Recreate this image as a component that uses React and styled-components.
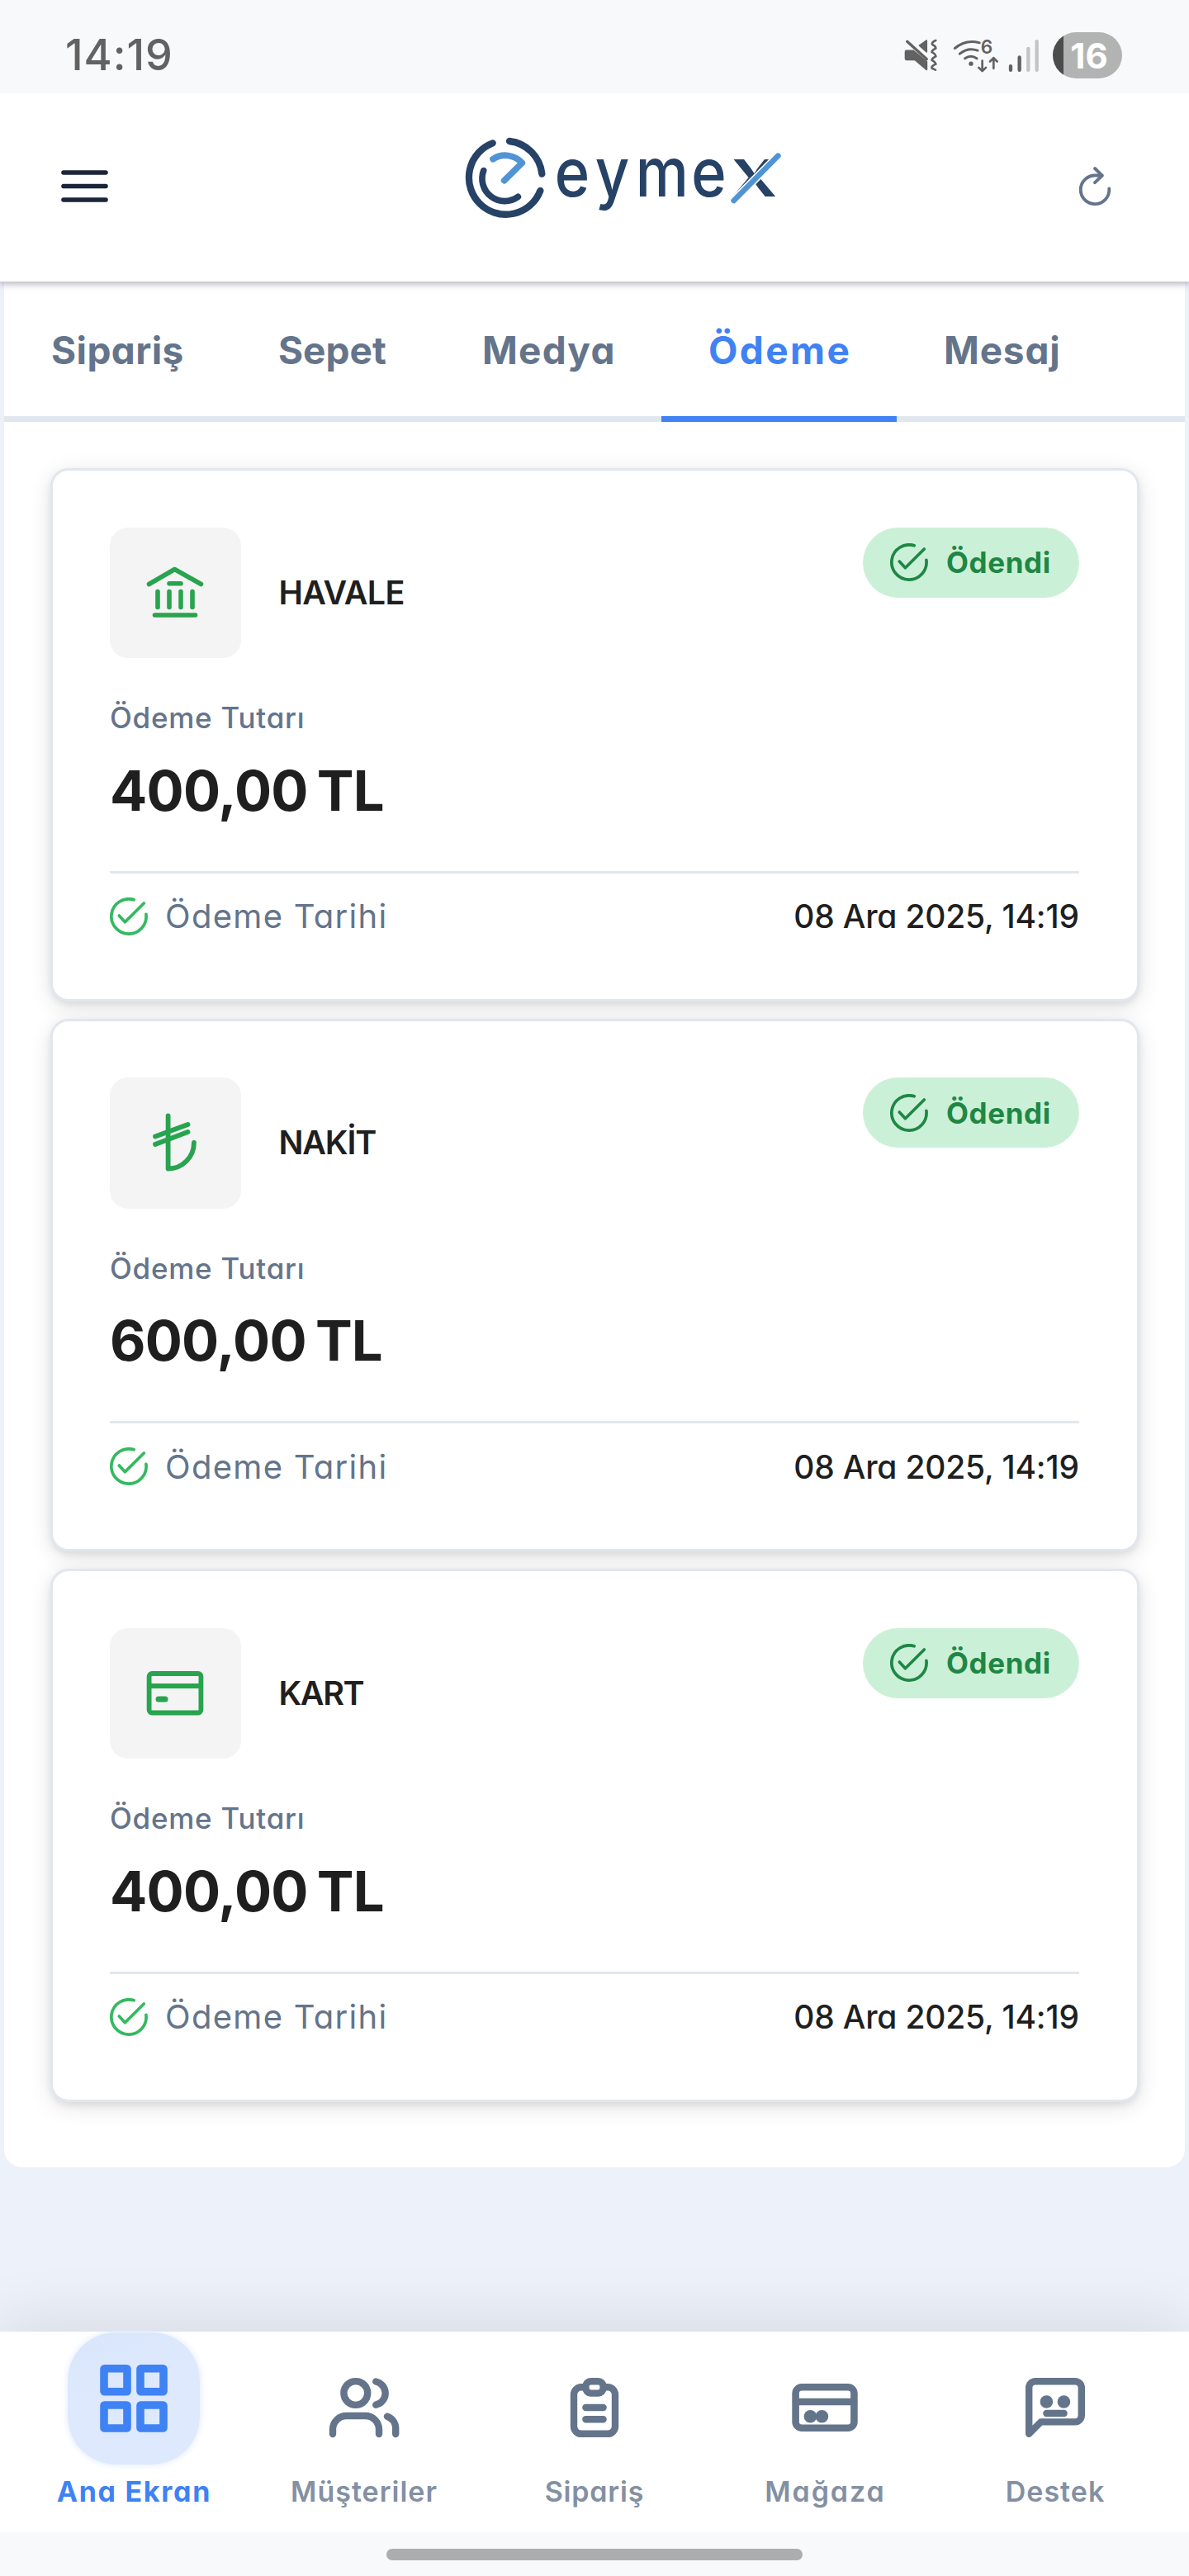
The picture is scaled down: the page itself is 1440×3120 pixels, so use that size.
import styled, { createGlobalStyle, css } from 'styled-components';

const GlobalStyle = createGlobalStyle`
  * {
    box-sizing: border-box;
  }
  body {
    margin: 0;
    background: #edf1fa;
    font-family: Inter, 'Noto Sans', sans-serif;
    font-feature-settings: 'cv11';
  }
  svg {
    display: block;
    flex: none;
  }
`;

const Page = styled.div`
  display: flex;
  flex-direction: column;
  width: 1440px;
  height: 3120px;
  overflow: hidden;
`;

// letter spacing without the gap it leaves after the last letter
const spaced = css`
  letter-spacing: ${({ $spacing = 0 }) => $spacing}px;
  margin-right: ${({ $spacing = 0 }) => -$spacing}px;
  white-space: nowrap;
`;

const StatusBar = styled.div`
  position: relative;
  z-index: 3;
  display: flex;
  justify-content: space-between;
  align-items: center;
  height: 113px;
  padding: 21px 81px 0 79px;
  background: #f8f9fb;
  color: #626262;
`;

const Clock = styled.span`
  ${spaced}
  font-size: 52px;
  font-weight: 550;
  line-height: 60px;
`;

const StatusIcons = styled.div`
  display: flex;
  align-items: center;
  .wifi {
    margin: 0 11px 0 18px;
  }
  .battery {
    margin-left: 16px;
  }
`;

const Header = styled.header`
  position: relative;
  z-index: 2;
  display: grid;
  grid-template-columns: 1fr auto 1fr;
  align-items: center;
  height: 228px;
  padding: 0 74px;
  background: #fff;
  box-shadow: 0 3px 7px rgba(30, 30, 60, 0.28), 0 3px 16px rgba(30, 30, 60, 0.06);
`;

const IconButton = styled.button`
  justify-self: ${({ $end }) => ($end ? 'end' : 'start')};
  padding: 0;
  border: 0;
  background: none;
  color: ${({ $end }) => ($end ? '#64748b' : '#1b2438')};
`;

const LogoWrap = styled.div`
  margin: -24px 0 0 60px;
`;

const Content = styled.main`
  flex: 1;
  padding: 0 5px;
`;

const Panel = styled.section`
  background: #fff;
  border-radius: 0 0 22px 22px;
`;

const Tabs = styled.nav`
  display: flex;
  height: 170px;
  box-shadow: inset 0 -7px 0 #e1e7ee;
`;

const Tab = styled.a`
  display: flex;
  align-items: center;
  width: ${({ $width }) => $width}px;
  padding: 2px 0 0 57px;
  border-bottom: 7px solid ${({ $active }) => ($active ? '#3f82f4' : 'transparent')};
  color: ${({ $active }) => ($active ? '#3f82f4' : '#64748b')};
  font-size: 46px;
  font-weight: 700;
  span {
    ${spaced}
  }
`;

const CardList = styled.div`
  display: flex;
  flex-direction: column;
  gap: 21px;
  padding: 56px 55.5px 79px;
`;

const Card = styled.article`
  height: 645.7px;
  padding: 68.5px 69.5px 0;
  border: 3.5px solid #e1e7ee;
  border-radius: 22px;
  background: #fff;
  box-shadow: 0 6px 28px rgba(0, 0, 0, 0.11), 0 4px 8px rgba(0, 0, 0, 0.08);
`;

const CardTop = styled.div`
  display: flex;
  align-items: flex-start;
  justify-content: space-between;
`;

const Method = styled.div`
  display: flex;
  align-items: center;
  gap: 46px;
`;

const MethodIcon = styled.div`
  display: flex;
  align-items: center;
  justify-content: center;
  width: 158.5px;
  height: 158.5px;
  border-radius: 22px;
  background: #f4f4f4;
  color: #28a44e;
`;

const MethodName = styled.span`
  ${spaced}
  color: #1f1f1f;
  font-size: 39.5px;
  font-weight: 600;
`;

const Badge = styled.div`
  display: flex;
  align-items: center;
  gap: 22px;
  width: 262px;
  height: 85px;
  padding-left: 33px;
  border-radius: 43px;
  background: #cbf0d8;
  color: #1f8744;
  font-size: 35px;
  font-weight: 650;
  span {
    ${spaced}
  }
`;

const AmountLabel = styled.div`
  ${spaced}
  margin-top: 46px;
  color: #64748b;
  font-size: 35px;
  font-weight: 500;
  line-height: 52px;
`;

const Amount = styled.div`
  ${spaced}
  margin-top: 12.5px;
  color: #1f1f1f;
  font-size: 67px;
  font-weight: 750;
  line-height: 100px;
  word-spacing: -4px;
`;

const CardFooter = styled.div`
  display: flex;
  align-items: center;
  justify-content: space-between;
  height: 86px;
  margin-top: 47px;
  padding-top: 21px;
  border-top: 3px solid #e1e7ee;
  font-size: 39px;
`;

const DateLabel = styled.div`
  display: flex;
  align-items: center;
  gap: 21px;
  color: #34b95f;
  font-size: 40px;
  span {
    ${spaced}
    color: #64748b;
  }
`;

const DateValue = styled.span`
  ${spaced}
  color: #1f1f1f;
  font-weight: 500;
`;

const BottomNav = styled.nav`
  position: relative;
  z-index: 1;
  display: grid;
  grid-template-columns: repeat(5, 279px);
  height: 243px;
  padding: 1px 22px 0;
  background: #fff;
  box-shadow: 0 -14px 70px rgba(0, 0, 0, 0.09);
`;

const NavItem = styled.a`
  display: flex;
  flex-direction: column;
  align-items: center;
  color: ${({ $active }) => ($active ? '#3f82f4' : '#64748b')};
`;

const NavIcon = styled.div`
  display: flex;
  align-items: center;
  justify-content: center;
  width: 160px;
  height: 160px;
  padding-top: ${({ $active }) => ($active ? 0 : 22)}px;
  border-radius: 58px;
  ${({ $active }) =>
    $active &&
    css`
      background: linear-gradient(160deg, #d8e6fb, #dfe9fd 45%);
      box-shadow: 0 0 8px #dde9fc;
    `}
`;

const NavLabel = styled.span`
  ${spaced}
  margin-top: 11px;
  color: ${({ $active }) => ($active ? '#3f82f4' : '#8390a3')};
  font-size: 34px;
  font-weight: ${({ $active }) => ($active ? 700 : 600)};
  line-height: 44px;
`;

const HomeBar = styled.div`
  position: relative;
  z-index: 2;
  display: flex;
  justify-content: center;
  height: 53px;
  padding-top: 20px;
  background: #f8f9fb;
  &::after {
    content: '';
    width: 504px;
    height: 14px;
    border-radius: 7px;
    background: #acadaf;
  }
`;

// stroke icons share a box whose origin is its centre
function Icon({ size = 84, stroke = 6, children }) {
  return (
    <svg
      width={size}
      height={size}
      viewBox={`${-size / 2} ${-size / 2} ${size} ${size}`}
      fill="none"
      stroke="currentColor"
      strokeWidth={stroke}
      strokeLinecap="round"
      strokeLinejoin="round"
    >
      {children}
    </svg>
  );
}

const CheckIcon = () => (
  <Icon size={46} stroke={3.7}>
    <path d="M6.2 -20.2A21.1 21.1 0 1 0 20.9 -2.7" />
    <path d="M-11.7 -1L-4.6 6.7L18.3 -16" />
  </Icon>
);

const BankIcon = () => (
  <Icon stroke={5.6}>
    <path d="M-31.5 -10.5L-0.5 -28.5L31.5 -10.5M-7 -11.3H7M-24.5 27H24.5" />
    <path d="M-21 -1.5V17.5M-7 -1.5V17.5M7 -1.5V17.5M21 -1.5V17.5" />
  </Icon>
);

const LiraIcon = () => (
  <Icon stroke={5.8}>
    <path d="M-8.4 -32.5V31.5A31.3 31.3 0 0 0 22.9 0" />
    <path d="M-24 -7.5L15.5 -22M-24 2L15.5 -13" />
  </Icon>
);

const CardIcon = () => (
  <Icon stroke={5.8}>
    <rect x="-31.4" y="-24" width="62.8" height="47.5" rx="3.5" />
    <path d="M-31 -9H31" />
    <path d="M-20 7H-12" strokeWidth="7" />
  </Icon>
);

const GridIcon = () => (
  <Icon stroke={9.6}>
    <rect x="-36" y="-36.3" width="28" height="28" rx="0.5" />
    <rect x="8" y="-36.3" width="28" height="28" rx="0.5" />
    <rect x="-36" y="8" width="28" height="28" rx="0.5" />
    <rect x="8" y="8" width="28" height="28" rx="0.5" />
  </Icon>
);

const UsersIcon = () => (
  <Icon size={88} stroke={8.4}>
    <circle cx="-10.2" cy="-17.5" r="14.4" />
    <path d="M14.2 -31.5A14.4 14.4 0 0 1 14.2 -3.3" />
    <path d="M-38 32V26A16.5 16.5 0 0 1 -21.5 10H1.5A16.5 16.5 0 0 1 18 26V32" />
    <path d="M28 10.8A15.5 15.5 0 0 1 38.2 25V32" />
  </Icon>
);

const ClipboardIcon = () => (
  <Icon stroke={8.4}>
    <path d="M-11 -24.7H-16A9 9 0 0 0 -25 -15.7V22.8A9 9 0 0 0 -16 31.8H16A9 9 0 0 0 25 22.8V-15.7A9 9 0 0 0 16 -24.7H11" />
    <rect x="-10.6" y="-31.8" width="21.2" height="14.4" rx="6" />
    <path d="M-10.6 0H10.6M-10.6 14.2H10.6" />
  </Icon>
);

const StoreIcon = () => (
  <Icon stroke={8.6}>
    <rect x="-35.4" y="-24.7" width="70.8" height="49.4" rx="7.5" />
    <path d="M-35 -7H35" />
    <circle cx="-17.6" cy="10.7" r="7.8" fill="currentColor" stroke="none" />
    <circle cx="-3.6" cy="10.7" r="7.8" fill="currentColor" stroke="none" />
  </Icon>
);

const SupportIcon = () => (
  <Icon stroke={8.4}>
    <path d="M-31.8 31.8V-24A7.8 7.8 0 0 1 -24 -31.8H24A7.8 7.8 0 0 1 31.8 -24V9.6A7.8 7.8 0 0 1 24 17.4H-17.4Z" />
    <circle cx="-10.6" cy="-7" r="7.8" fill="currentColor" stroke="none" />
    <circle cx="10.4" cy="-7" r="7.8" fill="currentColor" stroke="none" />
    <path d="M-10.6 7H10.6" />
  </Icon>
);

function MuteIcon() {
  return (
    <svg width="42" height="42" viewBox="100 80 125 125" fill="none" strokeLinecap="round">
      <path
        d="M111 126H136L184 166V194L142 158H112Q108 158 108 153V130Q108 126 111 126Z"
        fill="currentColor"
        stroke="currentColor"
        strokeWidth="6"
        strokeLinejoin="round"
      />
      <path d="M184 89V130L158 107Z" fill="currentColor" stroke="currentColor" strokeWidth="5" strokeLinejoin="round" />
      <path d="M114 93L184 156" stroke="currentColor" strokeWidth="10" />
      <path
        d="M217 89Q200 96 205 104Q217 110 217 117Q203 124 203 131Q217 139 217 146Q203 153 203 160Q217 168 217 174Q200 182 203 189L216 195"
        stroke="currentColor"
        strokeWidth="8"
      />
    </svg>
  );
}

function WifiIcon() {
  return (
    <svg
      className="wifi"
      width="56"
      height="56"
      viewBox="280 58.5 168 168"
      fill="none"
      stroke="currentColor"
      strokeWidth="9"
      strokeLinecap="round"
    >
      <path d="M287 117Q328 83 377 97M305 137Q335 112 370 125M324 154Q345 139 367 154" />
      <circle cx="346" cy="173" r="8" fill="currentColor" stroke="none" />
      <path d="M387 162V199M374 187L387 200L400 187M428 190V152M415 165L428 152L441 165" strokeWidth="8" strokeLinejoin="round" />
      <text x="381" y="137" fontSize="68" fontWeight="600" fill="currentColor" stroke="none">
        6
      </text>
    </svg>
  );
}

function SignalIcon() {
  return (
    <svg width="38" height="42" viewBox="482 80 114 125" strokeWidth="13" strokeLinecap="round">
      <path d="M491 182V196M523 150V196" stroke="#626262" />
      <path d="M555 118V196M586 92V196" stroke="#c3c4c5" />
    </svg>
  );
}

const Battery = styled.div`
  display: flex;
  align-items: center;
  justify-content: center;
  width: 84px;
  height: 56px;
  padding-left: 4px;
  border-radius: 28px;
  background: linear-gradient(to right, #4b4c4c 13px, #b2b3b3 13px);
  color: #fff;
  font-size: 42px;
  font-weight: 700;
`;

function Logo() {
  return (
    <svg width="420" height="130" viewBox="0 0 1260 390" fill="none" strokeLinecap="round" strokeLinejoin="round">
      <g stroke="#264266" strokeWidth="25">
        <path d="M170 70A134 134 0 1 0 343 243" />
        <path d="M231 63A134 134 0 0 1 349 182" />
        <path d="M137 170A82 82 0 0 0 262 265" strokeWidth="23" />
      </g>
      <path d="M171 128A82 82 0 0 1 277 142L212 206" stroke="#5094d3" strokeWidth="23" />
      <g fontSize="246" fontWeight="550" fill="#264266">
        <text x="449 616 783 1013" y="264" transform="scale(0.88 1)">
          eyme
        </text>
        <text x="820" y="264" transform="scale(1.26 1)">
          x
        </text>
      </g>
      <path d="M1046 279L1207 116" stroke="#fff" strokeWidth="30" />
      <path d="M1046 279L1207 116" stroke="#5094d3" strokeWidth="20" />
    </svg>
  );
}

const tabs = [
  { label: 'Sipariş', width: 275, spacing: 0.4 },
  { label: 'Sepet', width: 247, spacing: 0 },
  { label: 'Medya', width: 274, spacing: 1.2 },
  { label: 'Ödeme', width: 285, spacing: 2.4, active: true },
  { label: 'Mesaj', width: 252, spacing: 0.8 },
];

const payments = [
  { name: 'HAVALE', spacing: -0.6, icon: <BankIcon />, amount: '400,00 TL', date: '08 Ara 2025, 14:19' },
  { name: 'NAKİT', spacing: -1.2, icon: <LiraIcon />, amount: '600,00 TL', date: '08 Ara 2025, 14:19' },
  { name: 'KART', spacing: -1.4, icon: <CardIcon />, amount: '400,00 TL', date: '08 Ara 2025, 14:19' },
];

const navItems = [
  { label: 'Ana Ekran', spacing: 1.7, icon: <GridIcon />, active: true },
  { label: 'Müşteriler', spacing: 1, icon: <UsersIcon /> },
  { label: 'Sipariş', spacing: 0.8, icon: <ClipboardIcon /> },
  { label: 'Mağaza', spacing: 1.9, icon: <StoreIcon /> },
  { label: 'Destek', spacing: 1, icon: <SupportIcon /> },
];

function PaymentCard({ name, spacing, icon, amount, date }) {
  return (
    <Card>
      <CardTop>
        <Method>
          <MethodIcon>{icon}</MethodIcon>
          <MethodName $spacing={spacing}>{name}</MethodName>
        </Method>
        <Badge $spacing={0.6}>
          <CheckIcon />
          <span>Ödendi</span>
        </Badge>
      </CardTop>
      <AmountLabel $spacing={0.75}>Ödeme Tutarı</AmountLabel>
      <Amount $spacing={-0.8}>{amount}</Amount>
      <CardFooter>
        <DateLabel $spacing={1.3}>
          <CheckIcon />
          <span>Ödeme Tarihi</span>
        </DateLabel>
        <DateValue $spacing={-0.2}>{date}</DateValue>
      </CardFooter>
    </Card>
  );
}

export default function App() {
  return (
    <Page>
      <GlobalStyle />
      <StatusBar>
        <Clock $spacing={1}>14:19</Clock>
        <StatusIcons>
          <MuteIcon />
          <WifiIcon />
          <SignalIcon />
          <Battery className="battery">16</Battery>
        </StatusIcons>
      </StatusBar>
      <Header>
        <IconButton aria-label="Menü">
          <svg width="57" height="43" viewBox="0 0 57 43" stroke="currentColor" strokeWidth="5.6" strokeLinecap="round">
            <path d="M3 3H54M3 19.5H54M3 36H54" />
          </svg>
        </IconButton>
        <LogoWrap>
          <Logo />
        </LogoWrap>
        <IconButton $end aria-label="Yenile">
          <Icon size={80} stroke={3.9}>
            <path d="M17.3 1.5A17.3 17.3 0 1 1 0 -14.5H8.6" />
            <path d="M0 -23L8.8 -14.3L0 -5.8" />
          </Icon>
        </IconButton>
      </Header>
      <Content>
        <Panel>
          <Tabs>
            {tabs.map(({ label, width, spacing, active }) => (
              <Tab key={label} $width={width} $spacing={spacing} $active={active}>
                <span>{label}</span>
              </Tab>
            ))}
          </Tabs>
          <CardList>
            {payments.map((payment) => (
              <PaymentCard key={payment.name} {...payment} />
            ))}
          </CardList>
        </Panel>
      </Content>
      <BottomNav>
        {navItems.map(({ label, spacing, icon, active }) => (
          <NavItem key={label} $active={active}>
            <NavIcon $active={active}>{icon}</NavIcon>
            <NavLabel $spacing={spacing} $active={active}>
              {label}
            </NavLabel>
          </NavItem>
        ))}
      </BottomNav>
      <HomeBar />
    </Page>
  );
}
